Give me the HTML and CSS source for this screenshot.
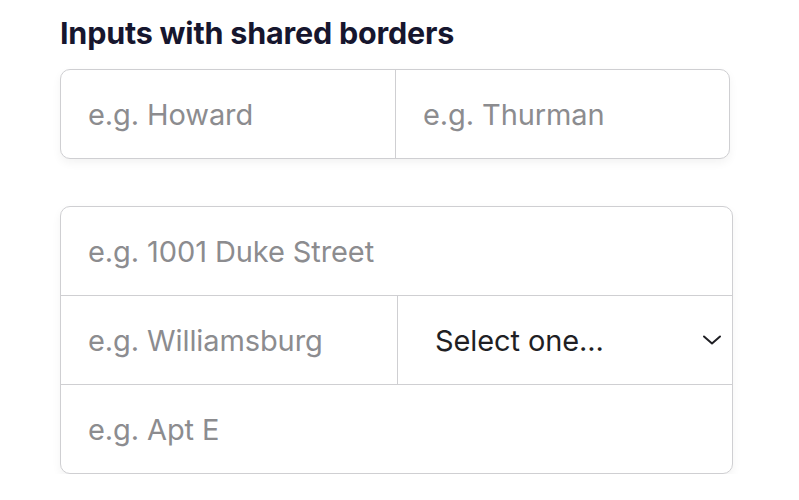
FILE: index.html
```html
<!DOCTYPE html>
<html lang="en">
<head>
    <meta charset="UTF-8">
    <meta name="viewport" content="width=device-width, initial-scale=1.0">
    <title>Inputs with shared borders</title>
    <link rel="stylesheet" href="styles.css">
</head>
<body>
    <h2 class="title">Inputs with shared borders</h2>

    <!-- Name row -->
    <div class="group group-name">
        <div class="row">
            <input type="text" class="field" placeholder="e.g. Howard">
            <input type="text" class="field" placeholder="e.g. Thurman">
        </div>
    </div>

    <!-- Address block -->
    <div class="group group-address">
        <div class="row">
            <input type="text" class="field" placeholder="e.g. 1001 Duke Street">
        </div>
        <div class="row">
            <input type="text" class="field" placeholder="e.g. Williamsburg">
            <div class="field select">
                <span>Select one...</span>
                <svg width="20" height="12" viewBox="0 0 20 12" fill="none" stroke="#1f1f24" stroke-width="2" stroke-linecap="round" stroke-linejoin="round">
                    <path d="M2 2.5 L10 9.5 L18 2.5"/>
                </svg>
            </div>
        </div>
        <div class="row">
            <input type="text" class="field" placeholder="e.g. Apt E">
        </div>
    </div>
</body>
</html>
```

FILE: styles.css
```css
* {
    box-sizing: border-box;
}
body {
    font-family: Inter, "Open Sans", sans-serif;
    margin: 0;
    padding: 15px 0 0 60px;
    background: #fff;
}
.title {
    font-size: 30.5px;
    font-weight: 700;
    color: #16162e;
    margin: 0 0 18px 0;
    letter-spacing: -0.2px;
    line-height: 36px;
}
.group {
    border: 1px solid #cfcfd2;
    border-radius: 10px;
    box-shadow: 0 4px 10px rgba(0, 0, 0, 0.05);
    overflow: hidden;
    background: #fff;
}
.group-name {
    width: 670px;
    margin-bottom: 47px;
}
.group-address {
    width: 673px;
}
.row {
    display: flex;
    height: 88px;
}
.row + .row {
    height: 89px;
    border-top: 1px solid #cfcfd2;
}
.field {
    flex: 1;
    min-width: 0;
    border: none;
    outline: none;
    padding: 0 27px;
    font-family: inherit;
    font-size: 29px;
    color: #1f1f24;
    background: transparent;
    letter-spacing: -0.1px;
}
.field + .field {
    border-left: 1px solid #cfcfd2;
}
.group-name .field:first-child {
    flex: 0 0 334px;
}
.group-address .row .field:first-child:not(:only-child) {
    flex: 0 0 336px;
}
.field::placeholder {
    color: #8c8c8f;
}
.select {
    display: flex;
    align-items: center;
    justify-content: space-between;
    padding: 0 10px 0 37px;
}
```
